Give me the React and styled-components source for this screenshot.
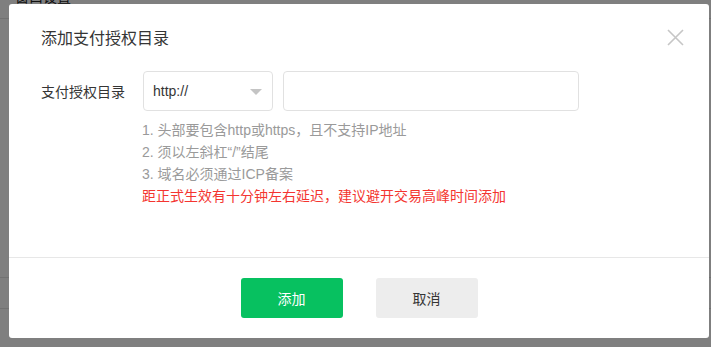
import React from "react";
import styled, { createGlobalStyle } from "styled-components";

const Global = createGlobalStyle`
  html, body { margin: 0; padding: 0; }
  body {
    width: 711px;
    height: 347px;
    overflow: hidden;
    background: #ffffff;
    font-family: "Liberation Sans", "Noto Sans CJK SC", sans-serif;
  }
`;

const Page = styled.div`
  position: relative;
  width: 711px;
  height: 347px;
  overflow: hidden;
`;

const BackTitle = styled.div`
  margin-top: -11px;
  padding-left: 15px;
  font-size: 14px;
  line-height: 16px;
  color: #222;
  border-bottom: 1px solid #e4e4e4;
  padding-bottom: 13px;
`;

const BackRow = styled.div`
  height: ${(p) => p.$h}px;
  border-bottom: 1px solid #e4e4e4;
`;

const Overlay = styled.div`
  position: absolute;
  inset: 0;
  background: rgba(0, 0, 0, 0.5);
  padding: 4px 0 0 9px;
  box-sizing: border-box;
`;

const Dialog = styled.div`
  width: 700px;
  height: 334px;
  background: #fff;
  border-radius: 3px;
  display: flex;
  flex-direction: column;
  overflow: hidden;
`;

const Header = styled.div`
  display: flex;
  align-items: center;
  justify-content: space-between;
  padding: 24px 25px 0 32px;
`;

const Title = styled.div`
  font-size: 16px;
  line-height: 22px;
  color: #353535;
`;

const Close = styled.button`
  width: 17px;
  height: 17px;
  padding: 0;
  margin-top: -3px;
  border: 0;
  background: none;
  display: flex;
  cursor: pointer;
`;

const Body = styled.div`
  flex: 1;
  padding: 21px 32px 0 32px;
`;

const FormRow = styled.div`
  display: flex;
  align-items: center;
  height: 40px;
`;

const Label = styled.div`
  width: 102px;
  font-size: 14px;
  color: #353535;
`;

const Select = styled.div`
  width: 130px;
  height: 40px;
  box-sizing: border-box;
  border: 1px solid #e1e1e1;
  border-radius: 4px;
  display: flex;
  align-items: center;
  justify-content: space-between;
  padding: 0 10px 0 9px;
  font-size: 14px;
  color: #353535;
`;

const Arrow = styled.span`
  width: 0;
  height: 0;
  border-left: 6px solid transparent;
  border-right: 6px solid transparent;
  border-top: 6px solid #c4c4c4;
  margin-top: 2px;
`;

const Input = styled.input`
  margin-left: 10px;
  width: 296px;
  height: 40px;
  box-sizing: border-box;
  border: 1px solid #e1e1e1;
  border-radius: 4px;
  outline: none;
  padding: 0 10px;
  font-size: 14px;
  font-family: inherit;
`;

const Hints = styled.div`
  margin: 8px 0 0 101px;
`;

const Hint = styled.div`
  font-size: 14px;
  line-height: 22px;
  color: ${(p) => (p.$warn ? "#f43530" : "#9a9a9a")};
`;

const Footer = styled.div`
  height: 81px;
  box-sizing: border-box;
  border-top: 1px solid #e7e7e7;
  display: flex;
  justify-content: center;
  align-items: flex-start;
  padding-top: 20px;
  gap: 33px;
`;

const Button = styled.button`
  width: 102px;
  height: 40px;
  border: 0;
  border-radius: 3px;
  font-size: 14px;
  font-family: inherit;
  background: ${(p) => (p.$primary ? "#07c160" : "#ededed")};
  color: ${(p) => (p.$primary ? "#ffffff" : "#353535")};
  cursor: pointer;
`;

export default function App() {
  return (
    <>
      <Global />
      <Page>
        <BackTitle>窗口设置</BackTitle>
        <BackRow $h={258} />
        <BackRow $h={30} />
        <Overlay>
          <Dialog>
            <Header>
              <Title>添加支付授权目录</Title>
              <Close aria-label="关闭">
                <svg width="17" height="17" viewBox="0 0 17 17">
                  <path
                    d="M1 1 L16 16 M16 1 L1 16"
                    stroke="#c6c6c6"
                    strokeWidth="1.6"
                    fill="none"
                  />
                </svg>
              </Close>
            </Header>
            <Body>
              <FormRow>
                <Label>支付授权目录</Label>
                <Select>
                  <span>http://</span>
                  <Arrow />
                </Select>
                <Input />
              </FormRow>
              <Hints>
                <Hint>1. 头部要包含http或https，且不支持IP地址</Hint>
                <Hint>2. 须以左斜杠“/”结尾</Hint>
                <Hint>3. 域名必须通过ICP备案</Hint>
                <Hint $warn>距正式生效有十分钟左右延迟，建议避开交易高峰时间添加</Hint>
              </Hints>
            </Body>
            <Footer>
              <Button $primary>添加</Button>
              <Button>取消</Button>
            </Footer>
          </Dialog>
        </Overlay>
      </Page>
    </>
  );
}
